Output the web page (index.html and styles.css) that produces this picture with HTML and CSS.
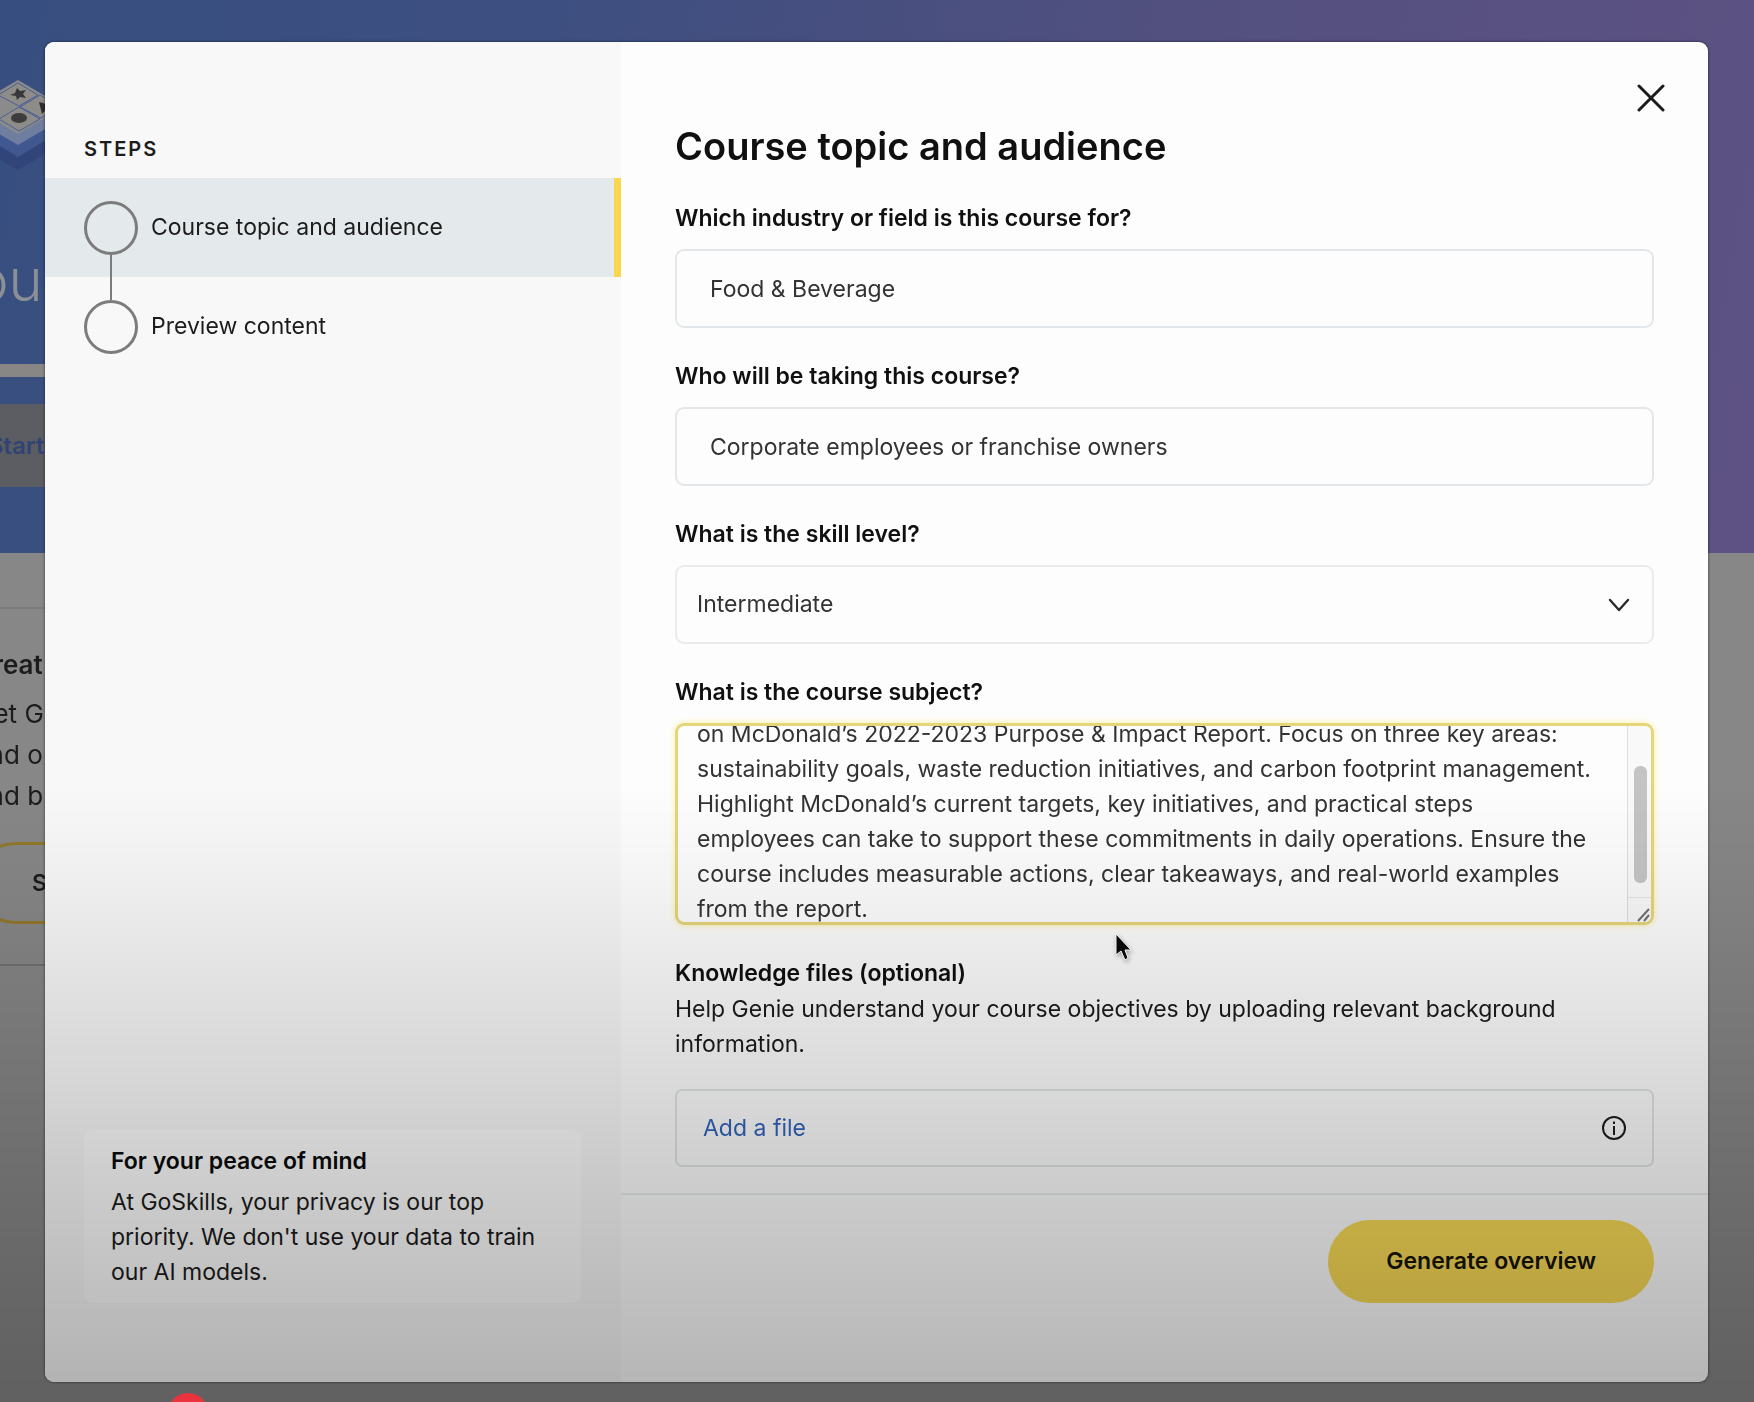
FILE: index.html
```html
<!DOCTYPE html>
<html lang="en">
<head>
<meta charset="utf-8">
<meta name="viewport" content="width=device-width, initial-scale=1">
<title>Course topic and audience</title>
<link rel="stylesheet" href="styles.css">
</head>
<body>
<div class="page" aria-hidden="true">
  <div class="hero">
    <svg class="hero-art" width="92" height="96" viewBox="-28 0 92 96">
      <path d="M-28 42 18 68 64 42V64L18 91-28 64z" fill="#31457a"/>
      <path d="M-28 34 18 60 64 34V50L18 78-28 50z" fill="#40588f"/>
      <path d="M-28 28 18 54 64 28V39L18 66-28 39z" fill="#6f7d9f"/>
      <path d="M18 1 64 28 18 55-28 28z" fill="#8b8b8b"/>
      <path d="M18 4 38 16 19 27-2 16z" fill="#8d8c89" stroke="#4a5f95" stroke-width="1"/>
      <path d="M19 28 40 40 19 52-1 40z" fill="#8d8c89" stroke="#4a5f95" stroke-width="1"/>
      <path d="M40 16 61 28 41 39 20 28z" fill="#8d8c89" stroke="#4a5f95" stroke-width="1"/>
      <path d="m17 9 3 3 6-1-3 4 3 4-6-1-3 3-1-4-6-1 5-2z" fill="#38383a"/>
      <ellipse cx="19" cy="39" rx="8" ry="5" fill="#3c3c3e"/>
      <path d="M39 23 50 26 42 35z" fill="#2d2d30"/>
    </svg>
    <p class="hero-title">You</p>
    <div class="hero-bar"></div>
    <div class="hero-action">Start</div>
  </div>
  <div class="tile">
    <h3 class="tile-title">Creat</h3>
    <p class="tile-text">Get Ge<br>and o<br>and b</p>
    <div class="tile-pill">S</div>
  </div>
</div>

<div class="overlay">
  <div class="modal" role="dialog" aria-modal="true" aria-labelledby="dialog-title">
    <aside class="sidebar">
      <h2 class="sidebar-title">STEPS</h2>
      <ol class="steps">
        <li class="step step-active"><span class="step-dot"></span>Course topic and audience</li>
        <li class="step"><span class="step-dot"></span>Preview content</li>
      </ol>
      <section class="privacy">
        <h3 class="privacy-title">For your peace of mind</h3>
        <p class="privacy-text">At GoSkills, your privacy is our top priority. We don't use your data to train our AI models.</p>
      </section>
    </aside>

    <main class="panel">
      <button class="close" type="button" aria-label="Close">
        <svg width="28" height="28" viewBox="0 0 28 28" fill="none" stroke="#1c1c1c" stroke-width="3" stroke-linecap="round"><path d="M2 2 26 26M26 2 2 26"/></svg>
      </button>
      <form class="form" id="course-form">
        <h1 class="form-title" id="dialog-title">Course topic and audience</h1>
        <div class="field">
          <label class="label" for="industry">Which industry or field is this course for?</label>
          <input class="control text-input" id="industry" type="text" value="Food &amp; Beverage">
        </div>
        <div class="field">
          <label class="label" for="audience">Who will be taking this course?</label>
          <input class="control text-input" id="audience" type="text" value="Corporate employees or franchise owners">
        </div>
        <div class="field">
          <label class="label" for="level">What is the skill level?</label>
          <div class="select-wrap">
            <select class="control select" id="level"><option>Intermediate</option></select>
            <svg class="chevron" width="22" height="14" viewBox="0 0 22 14" fill="none" stroke="#2b2b2b" stroke-width="2.4" stroke-linecap="round" stroke-linejoin="round"><path d="M2 2 11 12 20 2"/></svg>
          </div>
        </div>
        <div class="field">
          <label class="label" for="subject">What is the course subject?</label>
          <div class="textarea-wrap">
            <textarea class="control textarea" id="subject">Create a sustainability course for corporate employees based
on McDonald’s 2022-2023 Purpose &amp; Impact Report. Focus on three key areas: sustainability goals, waste reduction initiatives, and carbon footprint management. Highlight McDonald’s current targets, key initiatives, and practical steps employees can take to support these commitments in daily operations. Ensure the course includes measurable actions, clear takeaways, and real-world examples from the report.</textarea>
            <div class="scrollbar" aria-hidden="true">
              <div class="scroll-track"><div class="scroll-thumb"></div></div>
              <svg class="grip" width="16" height="16" viewBox="0 0 16 16" fill="none" stroke="#6f6f6f" stroke-width="2"><path d="M3 15 14 3M9 15 14 9"/></svg>
            </div>
          </div>
        </div>
        <div class="files">
          <h2 class="label">Knowledge files (optional)</h2>
          <p class="help">Help Genie understand your course objectives by uploading relevant background information.</p>
          <div class="file-box">
            <button class="add-file" type="button">Add a file</button>
            <button class="info" type="button" aria-label="File information">
              <svg width="26" height="26" viewBox="0 0 26 26" fill="none" stroke="#1f1f1f" stroke-width="2"><circle cx="13" cy="13" r="11"/><path d="M13 11V20"/><path d="M13 6.500V9"/></svg>
            </button>
          </div>
        </div>
      </form>
      <footer class="footer">
        <button class="submit" type="submit" form="course-form">Generate overview</button>
      </footer>
    </main>
  </div>
</div>

<div class="shade"></div>
<div class="playhead"></div>
<svg class="cursor" width="18" height="28" viewBox="0 0 18 28"><path d="M1 1V22L6 18 10 27 13 25 10 17H16z" fill="#0a0a0a" stroke="#f4f4f4" stroke-width="1"/></svg>
<script src="script.js"></script>
</body>
</html>
```
FILE: styles.css
```css
* {
  box-sizing: border-box;
}

body {
  margin: 0;
  background: #878787;
  color: #1c1c1c;
  font: 400 23px/35px Inter, "Liberation Sans", sans-serif;
}

h1, h2, h3, p, ol {
  margin: 0;
  padding: 0;
}

button, input, select, textarea {
  font: inherit;
  color: inherit;
}

button {
  border: 0;
  padding: 0;
  background: none;
  cursor: pointer;
}

/* Dimmed page behind the dialog */
.page {
  position: fixed;
  inset: 0;
  overflow: hidden;
}

.hero {
  height: 553px;
  padding-top: 79px;
  background: linear-gradient(100deg, #374f80 0%, #3d4f80 30%, #54507f 68%, #5d5283 100%);
}

.hero-art {
  display: block;
  margin-left: -28px;
}

.hero-title {
  margin: 73px 0 0 -60px;
  color: #8c8f96;
  font-size: 58px;
  font-weight: 300;
  line-height: 64px;
}

.hero-bar {
  width: 400px;
  height: 13px;
  margin-top: 52px;
  background: #888785;
}

.hero-action {
  width: 200px;
  height: 83px;
  margin-top: 27px;
  margin-left: -80px;
  padding-left: 68px;
  background: #5b5d62;
  color: #2f4376;
  font-size: 24px;
  font-weight: 600;
  line-height: 83px;
}

.tile {
  width: 400px;
  margin: 54px 0 0 -54px;
  padding: 38px 28px 40px;
  border-top: 2px solid #7b7b7b;
  border-bottom: 2px solid #707070;
}

.tile-title {
  font-size: 26px;
  font-weight: 600;
  line-height: 35px;
}

.tile-text {
  margin: 11px 0 26px;
  font-size: 26px;
  line-height: 41px;
}

.tile-pill {
  height: 82px;
  padding-left: 55px;
  border: 3px solid #91792a;
  border-radius: 41px;
  font-weight: 600;
  line-height: 76px;
}

/* Dialog */
.overlay {
  position: relative;
  padding: 42px 46px 20px 45px;
}

.modal {
  display: grid;
  grid-template-columns: 576px 1fr;
  min-height: calc(100vh - 62px);
  border-radius: 9px;
  overflow: hidden;
  background: #fdfdfd;
  box-shadow: 0 0 3px rgba(0, 0, 0, 0.6);
}

.sidebar {
  display: flex;
  flex-direction: column;
  padding: 90px 0 79px;
  background: #f8f8f8;
}

.sidebar-title {
  padding-left: 39px;
  font-size: 20px;
  font-weight: 600;
  letter-spacing: 2px;
  line-height: 35px;
}

.steps {
  margin-top: 11px;
  list-style: none;
}

.step {
  display: flex;
  align-items: center;
  gap: 13px;
  height: 99px;
  padding-left: 39px;
  position: relative;
}

.step-active {
  border-right: 7px solid #fad64f;
  background: #e4e9eb;
}

.step-dot {
  width: 54px;
  height: 54px;
  border: 3px solid #7c7c7c;
  border-radius: 50%;
}

.step-active::after {
  content: "";
  position: absolute;
  z-index: 1;
  top: 76px;
  left: 65px;
  width: 2px;
  height: 46px;
  background: #7c7c7c;
}

.privacy {
  margin: auto 40px 0 39px;
  padding: 14px 27px 13px;
  border-radius: 9px;
  background: #fdfdfd;
}

.privacy-title {
  color: #0c0c0c;
  font-size: 23px;
  font-weight: 600;
}

.privacy-text {
  margin-top: 6px;
}

.panel {
  display: flex;
  flex-direction: column;
  position: relative;
  min-width: 0;
}

.close {
  display: flex;
  position: absolute;
  top: 42px;
  right: 43px;
}

.form {
  padding: 80px 54px 26px;
}

.form-title {
  margin-bottom: 31px;
  color: #101010;
  font-size: 38px;
  font-weight: 600;
  line-height: 48px;
}

.field {
  margin-bottom: 31px;
}

.label {
  display: block;
  margin-bottom: 13px;
  color: #101010;
  font-size: 23px;
  font-weight: 600;
  line-height: 35px;
}

.control {
  display: block;
  width: 100%;
  height: 79px;
  border: 2px solid #e3e7ea;
  border-radius: 9px;
  outline: 0;
  background: transparent;
  color: #333;
}

.text-input {
  padding: 0 33px;
}

.select-wrap {
  display: grid;
  align-items: center;
}

.select-wrap > * {
  grid-area: 1 / 1;
}

.select {
  padding: 0 20px;
  border-color: #ebebeb;
  appearance: none;
}

.chevron {
  justify-self: end;
  margin-right: 24px;
  pointer-events: none;
}

.textarea-wrap {
  position: relative;
}

.textarea {
  height: 202px;
  padding: 22px 55px 22px 19px;
  border: 3px solid #e5d67c;
  box-shadow: 0 0 6px rgba(250, 230, 100, 0.6);
  overflow-y: scroll;
  resize: none;
  scrollbar-width: none;
}

/* Scrollbar and resize corner, laid over the right edge of the text box */
.scrollbar {
  display: flex;
  flex-direction: column;
  position: absolute;
  top: 3px;
  right: 3px;
  bottom: 3px;
  width: 24px;
  border-left: 1px solid #dedede;
  border-radius: 0 6px 6px 0;
  background: #f9f9f9;
}

.scroll-track {
  flex: 1;
  padding: 40px 4px 14px 6px;
  border-bottom: 1px solid #e4e4e4;
}

.scroll-thumb {
  height: 100%;
  border-radius: 6px;
  background: #c4c4c4;
}

.grip {
  align-self: flex-end;
  margin-top: 8px;
}

.files .label {
  margin-bottom: 1px;
}

.file-box {
  display: flex;
  align-items: center;
  justify-content: space-between;
  height: 78px;
  margin-top: 27px;
  padding: 0 25px 0 26px;
  border: 2px solid #e0e5e6;
  border-radius: 7px;
}

.add-file {
  color: #3465bd;
}

.info {
  display: flex;
}

.footer {
  display: flex;
  flex: 1;
  align-items: flex-start;
  justify-content: flex-end;
  padding: 25px 54px 60px;
  border-top: 2px solid #e7ebec;
}

.submit {
  height: 83px;
  padding: 0 58px;
  border-radius: 42px;
  background: #f8da56;
  color: #16140a;
  font-weight: 600;
}

/* Player chrome laid over the page */
.shade {
  position: fixed;
  inset: 0;
  background: linear-gradient(transparent 56%, rgba(0, 0, 0, 0.03) 62%, rgba(0, 0, 0, 0.1) 72%, rgba(0, 0, 0, 0.2) 86%, rgba(0, 0, 0, 0.285) 100%);
  pointer-events: none;
}

.playhead {
  position: fixed;
  left: 168px;
  bottom: -31px;
  width: 40px;
  height: 40px;
  border-radius: 50%;
  background: #eb333d;
}

.cursor {
  position: absolute;
  top: 933px;
  left: 1115px;
  filter: drop-shadow(1px 2px 2px rgba(0, 0, 0, 0.3));
}
```
FILE: script.js
```js
document.getElementById('subject').scrollTop = 66;
```
